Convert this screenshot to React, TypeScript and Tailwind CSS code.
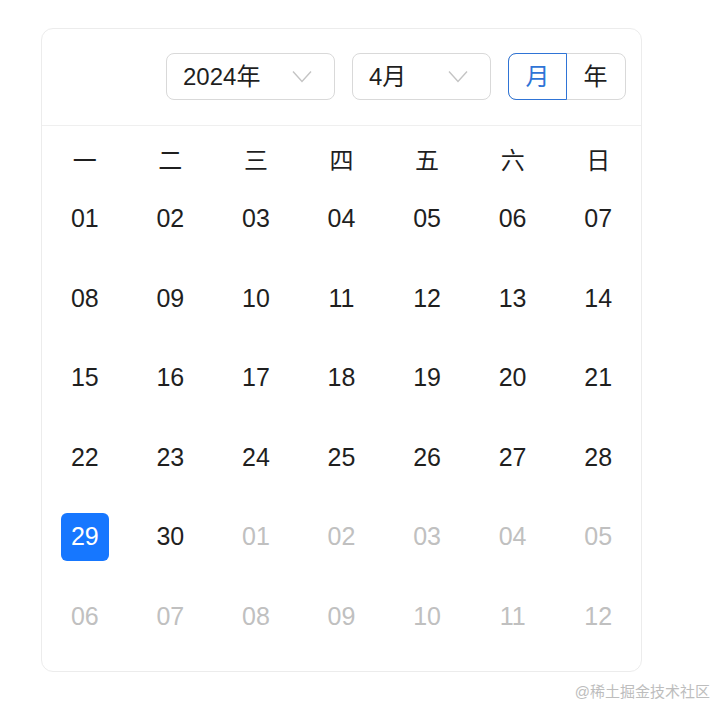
import { useState } from "react";

type Cell = { day: string; inMonth: boolean };

const WEEKDAYS = ["一", "二", "三", "四", "五", "六", "日"];

// April 2024 starts on Monday, so the grid is 30 days plus 12 of May
function buildCells(): Cell[] {
  const cells: Cell[] = [];
  for (let d = 1; d <= 30; d++) cells.push({ day: String(d).padStart(2, "0"), inMonth: true });
  for (let d = 1; d <= 12; d++) cells.push({ day: String(d).padStart(2, "0"), inMonth: false });
  return cells;
}

function Chevron() {
  return (
    <svg width="20" height="13" viewBox="0 0 20 13" fill="none">
      <polyline points="1,1.5 10,11.5 19,1.5" stroke="#c4c4c4" strokeWidth="1.4" />
    </svg>
  );
}

function Select({ label, width }: { label: string; width: string }) {
  return (
    <div
      className={`flex h-[47px] items-center justify-between rounded-lg border border-[#d9d9d9] bg-white pl-[16px] pr-[22px] ${width}`}
    >
      <span className="text-[24px] leading-none text-[#1f1f1f]">{label}</span>
      <Chevron />
    </div>
  );
}

export default function App() {
  const [mode, setMode] = useState<"month" | "year">("month");
  const cells = buildCells();

  return (
    <div
      className="min-h-[704px] w-[716px] bg-white pl-[41px] pt-[28px]"
      style={{ fontFamily: '"Liberation Sans", "Noto Sans CJK SC", sans-serif' }}
    >
      <div className="w-[601px] rounded-xl border border-[#ececec] bg-white">
        <header className="flex justify-end gap-[17px] border-b border-[#efefef] pb-[25px] pr-[15px] pt-[24px]">
          <Select label="2024年" width="w-[169px]" />
          <Select label="4月" width="w-[139px]" />
          <div className="flex h-[47px] w-[118px] rounded-lg border border-[#d9d9d9] text-[24px]">
            <button
              onClick={() => setMode("month")}
              className={`-m-px flex flex-1 items-center justify-center rounded-l-lg border ${
                mode === "month" ? "border-[#2f74d6] text-[#2f74d6]" : "border-transparent text-[#1f1f1f]"
              }`}
            >
              月
            </button>
            <button
              onClick={() => setMode("year")}
              className={`-my-px flex flex-1 items-center justify-center rounded-r-lg border ${
                mode === "year" ? "border-[#2f74d6] text-[#2f74d6]" : "border-transparent text-[#1f1f1f]"
              }`}
            >
              年
            </button>
          </div>
        </header>

        <div className="pb-[15px]">
          <div className="grid grid-cols-7 pt-[18px]">
            {WEEKDAYS.map((w) => (
              <div key={w} className="text-center text-[24px] leading-[34px] text-[#1f1f1f]">
                {w}
              </div>
            ))}
          </div>
          <div className="grid grid-cols-7 pt-[1px]">
            {cells.map((c, i) => {
              const selected = c.inMonth && c.day === "29";
              return (
                <div key={i} className="flex h-[79.5px] items-center justify-center">
                  <span
                    className={`flex h-12 w-12 items-center justify-center rounded-md text-[25px] ${
                      selected ? "bg-[#1677ff] text-white" : c.inMonth ? "text-[#1f1f1f]" : "text-[#c0c0c0]"
                    }`}
                  >
                    {c.day}
                  </span>
                </div>
              );
            })}
          </div>
        </div>
      </div>

      <div className="mt-[9px] pr-[6px] text-right text-[15px] text-[#bdbdbd]">@稀土掘金技术社区</div>
    </div>
  );
}
